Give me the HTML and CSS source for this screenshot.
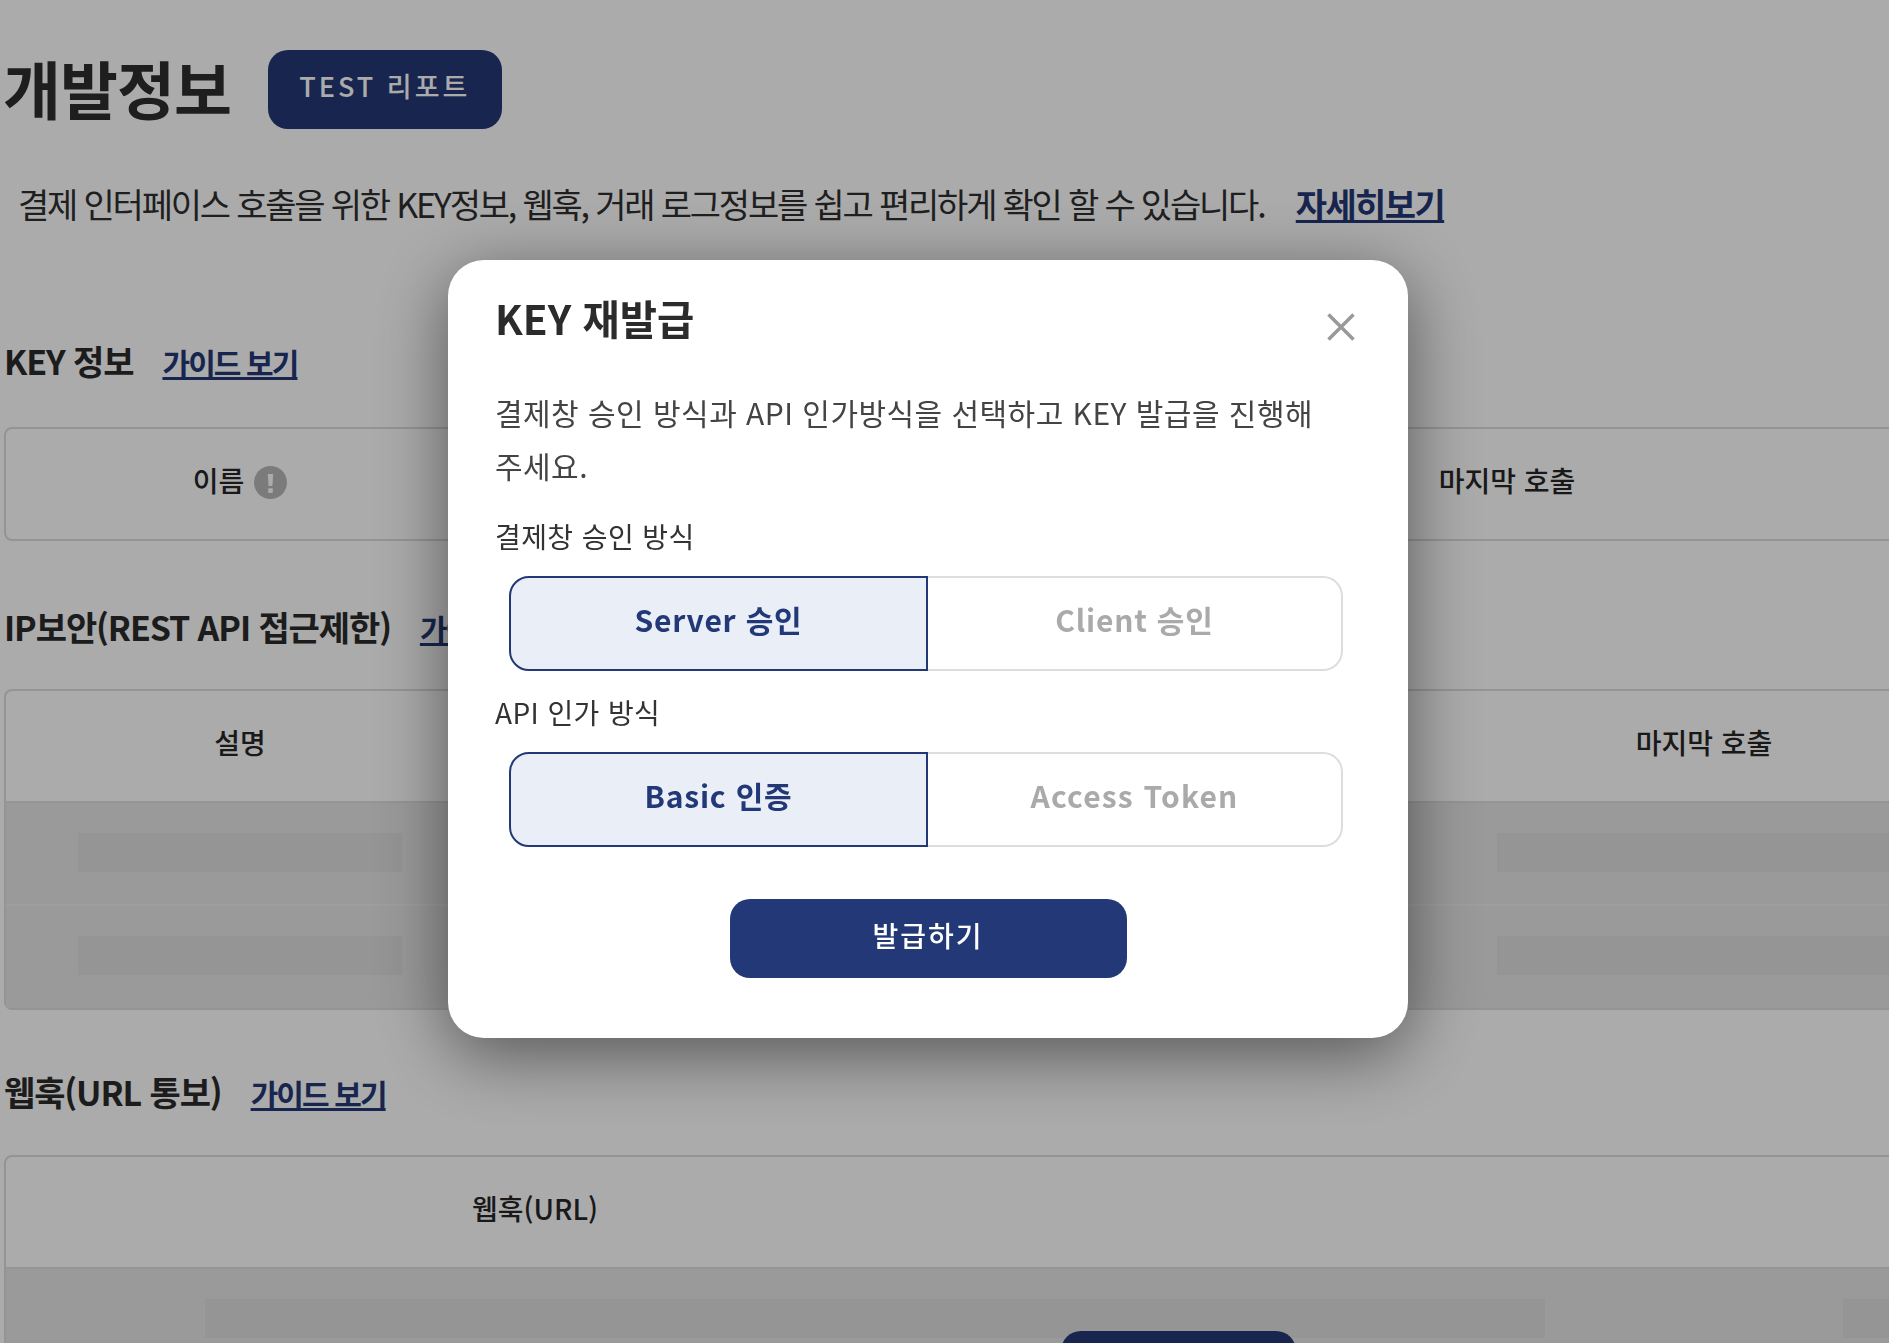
FILE: index.html
```html
<!DOCTYPE html>
<html lang="ko">
<head>
    <meta charset="UTF-8">
    <meta name="viewport" content="width=device-width, initial-scale=1.0">
    <title>개발정보</title>
    <link rel="stylesheet" href="styles.css">
</head>
<body>
    <div class="page">
        <div class="title-row">
            <h1>개발정보</h1>
            <button class="report-btn">TEST 리포트</button>
        </div>
        <p class="desc">결제 인터페이스 호출을 위한 KEY정보, 웹훅, 거래 로그정보를 쉽고 편리하게 확인 할 수 있습니다. <a href="#" class="desc-link">자세히보기</a></p>

        <div class="section-head key-head">
            <h2>KEY 정보</h2>
            <a href="#" class="guide">가이드 보기</a>
        </div>
        <div class="table key-table">
            <div class="table-head">
                <div class="cell">이름
                    <svg class="info-icon" width="33" height="33" viewBox="0 0 33 33"><circle cx="16.5" cy="16.5" r="16.5" fill="#b8b8b8"/><path d="M13.8 8 H19.2 L18.4 20 H14.6 Z" fill="#fff"/><rect x="14.2" y="22.3" width="4.6" height="4.6" fill="#fff"/></svg>
                </div>
                <div class="cell"></div>
                <div class="cell">마지막 호출</div>
            </div>
        </div>

        <div class="section-head ip-head">
            <h2>IP보안(REST API 접근제한)</h2>
            <a href="#" class="guide">가이드 보기</a>
        </div>
        <div class="table ip-table">
            <div class="table-head">
                <div class="cell">설명</div>
                <div class="cell"></div>
                <div class="cell">마지막 호출</div>
            </div>
            <div class="table-row">
                <div class="cell"><span class="skeleton"></span></div>
                <div class="cell"></div>
                <div class="cell"><span class="skeleton"></span></div>
            </div>
            <div class="table-row">
                <div class="cell"><span class="skeleton"></span></div>
                <div class="cell"></div>
                <div class="cell"><span class="skeleton"></span></div>
            </div>
        </div>

        <div class="section-head hook-head">
            <h2>웹훅(URL 통보)</h2>
            <a href="#" class="guide">가이드 보기</a>
        </div>
        <div class="table hook-table">
            <div class="table-head">
                <div class="cell">웹훅(URL)</div>
            </div>
            <div class="table-row">
                <div class="cell"><span class="skeleton"></span></div>
                <div class="cell"><span class="skeleton"></span></div>
            </div>
            <span class="hook-btn"></span>
        </div>
    </div>

    <div class="overlay">
        <div class="modal">
            <div class="modal-head">
                <h3>KEY 재발급</h3>
                <button class="close-btn" aria-label="닫기">
                    <svg width="28" height="28" viewBox="0 0 28 28"><path d="M1.5 1.5 L26.5 26.5 M26.5 1.5 L1.5 26.5" stroke="#999" stroke-width="3.5" fill="none"/></svg>
                </button>
            </div>
            <p class="modal-text">결제창 승인 방식과 API 인가방식을 선택하고 KEY 발급을 진행해 주세요.</p>

            <div class="field-label">결제창 승인 방식</div>
            <div class="segment">
                <div class="seg-item active">Server 승인</div>
                <div class="seg-item">Client 승인</div>
            </div>

            <div class="field-label second">API 인가 방식</div>
            <div class="segment">
                <div class="seg-item active">Basic 인증</div>
                <div class="seg-item wide">Access Token</div>
            </div>

            <div class="modal-foot">
                <button class="issue-btn">발급하기</button>
            </div>
        </div>
    </div>
</body>
</html>
```

FILE: styles.css
```css
* {
    box-sizing: border-box;
}
html, body {
    margin: 0;
    height: 100%;
    overflow: hidden;
}
body {
    font-family: "Noto Sans CJK KR", "Noto Sans", sans-serif;
    color: #2b2b2b;
    background: #fff;
}
.page {
    width: 2200px;
    height: 1343px;
    overflow: hidden;
    padding: 50px 0 0 4px;
}
.title-row {
    display: flex;
    align-items: center;
    gap: 37px;
    height: 79px;
}
h1 {
    margin: 0 0 0 -1px;
    padding-bottom: 5px;
    font-size: 63px;
    font-weight: 700;
    letter-spacing: -1px;
    line-height: 74px;
    color: #2e2e2e;
}
.report-btn {
    width: 234px;
    height: 79px;
    border: none;
    border-radius: 20px;
    background: #233876;
    color: #fff;
    font-family: inherit;
    font-size: 27px;
    font-weight: 500;
    letter-spacing: 3px;
    padding: 0 0 8px;
}
.desc {
    margin: 55px 0 1px 14px;
    font-size: 34px;
    line-height: 40px;
    letter-spacing: -2.2px;
    color: #2f2f2f;
}
.desc-link {
    margin-left: 24px;
    font-weight: 700;
    letter-spacing: -1.6px;
    color: #233876;
}
.section-head {
    display: flex;
    align-items: center;
    gap: 29px;
    height: 40px;
}
.key-head {
    margin-top: 116px;
}
.ip-head {
    margin-top: 65px;
}
.hook-head {
    margin-top: 61px;
}
h2 {
    margin: 0;
    font-size: 34px;
    font-weight: 700;
    letter-spacing: -1.1px;
    color: #2b2b2b;
}
.guide {
    padding-top: 4px;
    font-size: 30px;
    font-weight: 700;
    letter-spacing: -1.9px;
    color: #233876;
}
.table {
    position: relative;
    border: 2px solid #ddd;
    border-radius: 8px 0 0 8px;
}
.key-table {
    margin-top: 47px;
}
.ip-table {
    margin-top: 43px;
}
.hook-table {
    margin-top: 44px;
}
.table-head, .table-row {
    display: grid;
    text-align: center;
}
.table-head {
    height: 110px;
    align-items: center;
    padding-bottom: 8px;
    font-size: 28px;
    font-weight: 500;
    color: #262626;
}
.table-row {
    height: 104px;
    padding-top: 30px;
    background: #e6e6e6;
    border-top: 2px solid #dedede;
}
.table-head + .table-row {
    height: 103px;
}
.table-row + .table-row {
    border-top: 2px solid #ececec;
}
.cell {
    display: flex;
    align-items: center;
    justify-content: center;
    gap: 10px;
}
.table-row .cell {
    align-items: flex-start;
}
.skeleton {
    display: block;
    height: 39px;
    background: #dedede;
}
.key-table .table-head {
    grid-template-columns: 468px 802px 462px;
}
.ip-table .table-head, .ip-table .table-row {
    grid-template-columns: 468px 949px 562px;
}
.ip-table .skeleton {
    width: 324px;
}
.ip-table .cell:last-child .skeleton {
    width: 414px;
}
.hook-table .table-head {
    grid-template-columns: 1058px;
}
.hook-table .table-row {
    grid-template-columns: 1638px 300px;
    padding-left: 199px;
}
.hook-table .table-row .cell {
    justify-content: flex-start;
}
.hook-table .cell:first-child .skeleton {
    width: 1340px;
}
.hook-table .cell:last-child .skeleton {
    width: 300px;
}
.hook-btn {
    position: absolute;
    left: 1055px;
    top: 174px;
    width: 235px;
    height: 80px;
    border-radius: 20px;
    background: #233876;
}
.info-icon {
    display: block;
    margin-top: 4px;
}
.overlay {
    position: fixed;
    inset: 0;
    background: rgba(0, 0, 0, 0.33);
    padding: 260px 0 0 448px;
}
.modal {
    width: 960px;
    height: 778px;
    padding: 30px 48px 0 47px;
    background: #fff;
    border-radius: 36px;
    box-shadow: 0 16px 70px rgba(0, 0, 0, 0.5);
}
.modal-head {
    display: flex;
    justify-content: space-between;
    align-items: flex-start;
    height: 70px;
}
h3 {
    margin: 0;
    font-size: 40.5px;
    font-weight: 700;
    line-height: 56px;
    color: #2b2b2b;
}
.close-btn {
    margin: 23px 5px 0 0;
    padding: 0;
    border: none;
    background: none;
    line-height: 0;
}
.modal-text {
    max-width: 830px;
    margin: 26px 0 0;
    font-size: 30px;
    line-height: 53px;
    letter-spacing: 0.46px;
    color: #444;
}
.field-label {
    margin-top: 24px;
    font-size: 28px;
    line-height: 40px;
    letter-spacing: 0.4px;
    color: #333;
}
.field-label.second {
    margin-top: 21px;
}
.segment {
    display: grid;
    grid-template-columns: 419px 1fr;
    width: 834px;
    height: 95px;
    margin: 20px 0 0 14px;
}
.seg-item {
    display: flex;
    align-items: center;
    justify-content: center;
    padding-bottom: 9px;
    border: 2px solid #ddd;
    border-left: none;
    border-radius: 0 20px 20px 0;
    font-size: 30px;
    font-weight: 700;
    letter-spacing: 0.8px;
    color: #aaa;
}
.seg-item.wide {
    letter-spacing: 1.2px;
}
.seg-item.active {
    border: 2px solid #233876;
    border-radius: 20px 0 0 20px;
    background: #e9eef7;
    color: #233876;
}
.modal-foot {
    display: flex;
    justify-content: center;
    margin: 52px 0 0 1px;
}
.issue-btn {
    width: 397px;
    height: 79px;
    border: none;
    border-radius: 20px;
    background: #233876;
    color: #fff;
    font-family: inherit;
    font-size: 28px;
    font-weight: 500;
    letter-spacing: 2px;
    padding: 0 0 7px;
}
```
